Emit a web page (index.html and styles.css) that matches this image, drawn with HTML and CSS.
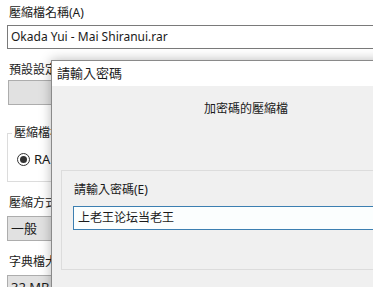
FILE: index.html
```html
<!DOCTYPE html>
<html lang="zh-Hant">
<head>
  <meta charset="UTF-8">
  <meta name="viewport" content="width=device-width, initial-scale=1.0">
  <title>請輸入密碼</title>
  <link rel="stylesheet" href="styles.css">
</head>
<body>
  <div class="main">
    <div class="lbl">壓縮檔名稱(A)</div>
    <div class="field">Okada Yui - Mai Shiranui.rar</div>
    <div class="lbl gap">預設設定</div>
    <div class="btn"></div>
    <fieldset class="group">
      <legend>壓縮檔格式</legend>
      <div class="radio"><span class="dot"></span>RAR</div>
    </fieldset>
    <div class="lbl gap">壓縮方式</div>
    <div class="combo">一般</div>
    <div class="lbl gap">字典檔大小</div>
    <div class="combo">32 MB</div>
  </div>

  <!-- password dialog floating over the archive window -->
  <div class="dialog">
    <div class="title">請輸入密碼</div>
    <div class="body">
      <div class="caption">加密碼的壓縮檔</div>
      <div class="frame">
        <div class="lbl">請輸入密碼(E)</div>
        <div class="pwd">上老王论坛当老王</div>
      </div>
    </div>
  </div>
</body>
</html>
```

FILE: styles.css
```css
* {
  box-sizing: border-box;
  margin: 0;
  padding: 0;
}

body {
  font-family: "Noto Sans", "Noto Sans CJK TC", sans-serif;
  font-size: 12px;
  color: #1a1a1a;
  background: #fff;
  width: 373px;
  height: 287px;
  overflow: hidden;
  position: relative;
}

.main {
  padding: 5px 0 0 9px;
}

.lbl {
  line-height: 16px;
  height: 16px;
  white-space: nowrap;
}

.lbl.gap {
  margin-top: 13px;
}

.field {
  margin: 4px 0 0 -2px;
  width: 420px;
  height: 24px;
  border: 1px solid #7a7a7a;
  padding-left: 3px;
  line-height: 22px;
}

.btn {
  margin: 2px 0 0 -1px;
  width: 420px;
  height: 25px;
  border: 1px solid #adadad;
  background: #e1e1e1;
}

.group {
  margin: 20px 0 0 -2px;
  width: 420px;
  height: 57px;
  border: 1px solid #dcdcdc;
}

.group legend {
  margin-left: 4px;
  padding: 0 2px;
  line-height: 16px;
}

.radio {
  display: flex;
  align-items: center;
  margin: 9px 0 0 9px;
  font-size: 13px;
}

.dot {
  width: 13px;
  height: 13px;
  border: 1px solid #333;
  border-radius: 50%;
  margin-right: 4px;
  display: flex;
  align-items: center;
  justify-content: center;
}

.dot::before {
  content: "";
  width: 7px;
  height: 7px;
  border-radius: 50%;
  background: #333;
}

.combo {
  margin: 5px 0 0 -2px;
  width: 60px;
  height: 25px;
  border: 1px solid #adadad;
  background: #e1e1e1;
  padding-left: 3px;
  line-height: 23px;
  font-size: 13px;
}

.dialog {
  position: absolute;
  left: 51px;
  top: 60px;
  width: 340px;
  height: 240px;
  border: 1px solid #8a8a8a;
  background: #f0f0f0;
  box-shadow: 0 0 11px rgba(0, 0, 0, 0.28);
}

.title {
  height: 25px;
  background: #fff;
  padding: 4px 0 0 5px;
  font-size: 13px;
  line-height: 17px;
}

.body {
  padding-top: 15px;
}

.caption {
  margin-left: 152px;
  line-height: 16px;
}

.frame {
  margin: 53px 0 0 9px;
  height: 100px;
  border: 1px solid #dcdcdc;
  padding: 11px 0 0 12px;
}

.pwd {
  margin: 8px 0 0 -1px;
  width: 320px;
  height: 24px;
  border: 1px solid #3c7fb1;
  background: #fbfefe;
  padding-left: 4px;
  line-height: 22px;
}
```
